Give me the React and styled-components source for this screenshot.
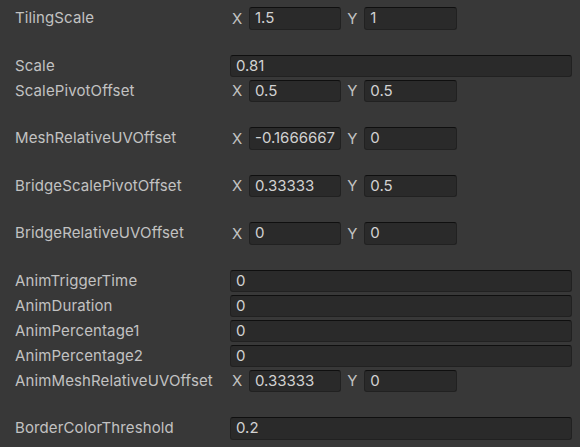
import React from "react";
import styled, { createGlobalStyle } from "styled-components";

const GlobalStyle = createGlobalStyle`
  html, body {
    margin: 0;
    padding: 0;
    background: #383838;
  }
  body {
    font-family: "Inter", "Noto Sans", sans-serif;
    font-size: 15px;
    letter-spacing: 0.12px;
    color: #c2c2c2;
  }
`;

const fields = [
  { label: "TilingScale", x: "1.5", y: "1" },
  { space: true },
  { label: "Scale", value: "0.81" },
  { label: "ScalePivotOffset", x: "0.5", y: "0.5" },
  { space: true },
  { label: "MeshRelativeUVOffset", x: "-0.1666667", y: "0" },
  { space: true },
  { label: "BridgeScalePivotOffset", x: "0.33333", y: "0.5" },
  { space: true },
  { label: "BridgeRelativeUVOffset", x: "0", y: "0" },
  { space: true },
  { label: "AnimTriggerTime", value: "0" },
  { label: "AnimDuration", value: "0" },
  { label: "AnimPercentage1", value: "0" },
  { label: "AnimPercentage2", value: "0" },
  { label: "AnimMeshRelativeUVOffset", x: "0.33333", y: "0" },
  { space: true },
  { label: "BorderColorThreshold", value: "0.2" },
];

const App = () => {
  return (
    <>
      <GlobalStyle />
      <Inspector>
        {fields.map((f, i) =>
          f.space ? (
            <Spacer key={i} />
          ) : (
            <Row key={i}>
              <Label>{f.label}</Label>
              {f.value !== undefined ? (
                <Field>{f.value}</Field>
              ) : (
                <VectorGroup>
                  <Axis>
                    <AxisLabel>X</AxisLabel>
                    <Field>{f.x}</Field>
                  </Axis>
                  <Axis>
                    <AxisLabel>Y</AxisLabel>
                    <Field>{f.y}</Field>
                  </Axis>
                </VectorGroup>
              )}
            </Row>
          )
        )}
      </Inspector>
    </>
  );
};

const Inspector = styled.div`
  width: 580px;
  height: 447px;
  box-sizing: border-box;
  padding: 7px 8px 0 15px;
  overflow: hidden;
  display: flex;
  flex-direction: column;
`;

const Row = styled.div`
  display: grid;
  grid-template-columns: 215px 1fr;
  align-items: center;
  height: 22.5px;
  margin-bottom: 2.5px;
  flex-shrink: 0;
`;

const Spacer = styled.div`
  height: 22.5px;
  flex-shrink: 0;
`;

const Label = styled.div`
  white-space: nowrap;
  overflow: hidden;
  color: #c2c2c2;
  line-height: 22px;
`;

const Field = styled.div`
  box-sizing: border-box;
  height: 22.5px;
  min-width: 0;
  flex: 1;
  padding: 0 5px;
  background: #2a2a2a;
  border: 1px solid #212121;
  border-top-color: #0f0f0f;
  border-radius: 3px;
  color: #d2d2d2;
  letter-spacing: 0;
  line-height: 20px;
  white-space: nowrap;
  overflow: hidden;
`;

const VectorGroup = styled.div`
  display: grid;
  grid-template-columns: repeat(3, 1fr);
  column-gap: 4px;
`;

const Axis = styled.div`
  display: flex;
  align-items: center;
`;

const AxisLabel = styled.span`
  width: 19px;
  flex-shrink: 0;
  padding-left: 2px;
  box-sizing: border-box;
  color: #c2c2c2;
`;

export default App;
